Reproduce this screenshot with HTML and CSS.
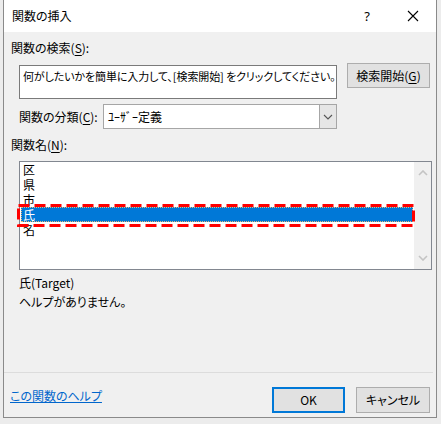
FILE: index.html
```html
<!DOCTYPE html>
<html lang="ja">
<head>
<meta charset="utf-8">
<link rel="stylesheet" href="styles.css">
</head>
<body>
<div class="dialog">
  <div class="titlebar">
    <span class="title">関数の挿入</span>
    <span class="tb-btn help">?</span>
    <span class="tb-btn close"><svg width="12" height="12" viewBox="0 0 12 12"><path d="M1 1 L11 11 M11 1 L1 11" stroke="#000" stroke-width="1.1" fill="none"/></svg></span>
  </div>
  <div class="content">
    <div class="label l-search">関数の検索(<u>S</u>):</div>
    <div class="search-row">
      <div class="search-box">何がしたいかを簡単に入力して、[検索開始] をクリックしてください。</div>
      <div class="btn btn-go">検索開始(<u>G</u>)</div>
    </div>
    <div class="cat-row">
      <span class="cat-label">関数の分類(<u>C</u>):</span>
      <div class="select">
        <span class="sel-text">ﾕｰｻﾞｰ定義</span>
        <span class="sel-arrow"><svg width="10" height="6" viewBox="0 0 10 6"><path d="M1 1 L5 5 L9 1" stroke="#555" stroke-width="1.1" fill="none"/></svg></span>
      </div>
    </div>
    <div class="label l-names">関数名(<u>N</u>):</div>
    <div class="listbox">
      <ul class="items">
        <li>区</li>
        <li>県</li>
        <li>市</li>
        <li class="selected">氏</li>
        <li>名</li>
      </ul>
      <div class="scrollbar">
        <svg width="10" height="6" viewBox="0 0 10 6"><path d="M1 5 L5 1 L9 5" stroke="#c4c4c4" stroke-width="1.6" fill="none"/></svg>
        <svg width="10" height="6" viewBox="0 0 10 6"><path d="M1 1 L5 5 L9 1" stroke="#c4c4c4" stroke-width="1.6" fill="none"/></svg>
      </div>
      <svg class="annot" width="398" height="23" viewBox="0 0 398 23"><rect x="1.5" y="1.5" width="395" height="20" fill="none" stroke="#ff0000" stroke-width="3" stroke-dasharray="11 5"/></svg>
    </div>
    <div class="desc d1">氏(Target)</div>
    <div class="desc d2">ヘルプがありません。</div>
  </div>
  <div class="footer">
    <div class="sep"></div>
    <div class="foot-row">
      <a class="help-link" href="#">この関数のヘルプ</a>
      <div class="btn btn-ok">OK</div>
      <div class="btn btn-cancel">キャンセル</div>
    </div>
  </div>
</div>
</body>
</html>
```
FILE: styles.css
```css
* { box-sizing: border-box; }
body {
  margin: 0;
  width: 441px;
  height: 424px;
  overflow: hidden;
  background: #ececec;
  font-family: "Noto Sans CJK JP", "Noto Sans", sans-serif;
  font-size: 12px;
  color: #000;
  font-feature-settings: "palt";
}
u { text-decoration: underline; text-underline-offset: 2px; }
.dialog {
  margin-left: 3px;
  width: 434px;
  height: 418px;
  border: 1px solid #8a8a8a;
  border-top: none;
  background: #f0f0f0;
  display: flex;
  flex-direction: column;
}
.titlebar {
  height: 32px;
  background: #fff;
  display: flex;
  align-items: center;
  flex: none;
}
.title {
  flex: 1;
  padding-left: 8px;
  font-size: 12px;
  line-height: 16px;
}
.tb-btn {
  width: 46px;
  height: 32px;
  display: flex;
  align-items: center;
  justify-content: center;
}
.help { font-size: 13px; font-family: "Noto Sans", sans-serif; }
.content {
  padding: 8px 0 0 0;
}
.label { line-height: 16px; padding-left: 7px; }
.search-row {
  display: flex;
  align-items: flex-start;
  margin-top: 7px;
  padding-left: 15px;
}
.search-box {
  margin-top: 2px;
  width: 318px;
  height: 34px;
  background: #fff;
  border: 1px solid #7a7a7a;
  padding: 2px 0 0 3px;
  font-size: 11px;
  letter-spacing: -0.1px;
  line-height: 16px;
  white-space: nowrap;
  overflow: hidden;
}
.btn {
  background: #e1e1e1;
  border: 1px solid #adadad;
  display: flex;
  align-items: center;
  justify-content: center;
  line-height: 16px;
}
.btn-go {
  margin-left: 10px;
  width: 83px;
  height: 25px;
}
.cat-row {
  display: flex;
  align-items: center;
  margin-top: 5px;
  padding-left: 15px;
}
.cat-label { width: 84px; line-height: 16px; }
.select {
  width: 234px;
  height: 25px;
  border: 1px solid #a6a6a6;
  background: #fff;
  display: flex;
  align-items: stretch;
}
.sel-text {
  flex: 1;
  padding-left: 4px;
  line-height: 23px;
}
.sel-arrow {
  width: 17px;
  background: #e6e6e6;
  border-left: 1px solid #a6a6a6;
  display: flex;
  align-items: center;
  justify-content: center;
}
.l-names { margin-top: 8px; }
.listbox {
  position: relative;
  margin: 8px 0 0 15px;
  width: 413px;
  height: 109px;
  border: 1px solid #828790;
  background: #fff;
  display: flex;
}
.items {
  list-style: none;
  margin: 0;
  padding: 0;
  flex: 1;
}
.items li {
  height: 15px;
  line-height: 15px;
  padding-left: 3px;
  margin-left: 0;
}
.items li.selected {
  margin-left: 1px;
  width: 392px;
  padding-left: 2px;
  background: #0078d7;
  color: #fff;
  outline: 1px dotted #e8b878;
  outline-offset: -1px;
}
.scrollbar {
  width: 17px;
  background: #f0f0f0;
  display: flex;
  flex-direction: column;
  align-items: center;
  justify-content: space-between;
  padding: 8px 0 8px;
}
.annot {
  position: absolute;
  left: -3px;
  top: 42px;
}
.desc { padding-left: 15px; line-height: 18px; }
.d1 { margin-top: 4px; }
.d2 { margin-top: 1px; }
.footer {
  margin-top: auto;
  flex: none;
}
.sep {
  height: 1px;
  background: #dcdcdc;
  margin-right: 3px;
}
.foot-row {
  display: flex;
  align-items: center;
  padding: 14px 6px 4px 6px;
}
.help-link {
  flex: 1;
  color: #0066cc;
  text-decoration: underline;
  line-height: 16px;
  margin-top: -9px;
}
.btn-ok {
  width: 73px;
  height: 26px;
  border: 2px solid #0078d7;
}
.btn-cancel {
  margin-left: 11px;
  width: 74px;
  height: 26px;
}
```
